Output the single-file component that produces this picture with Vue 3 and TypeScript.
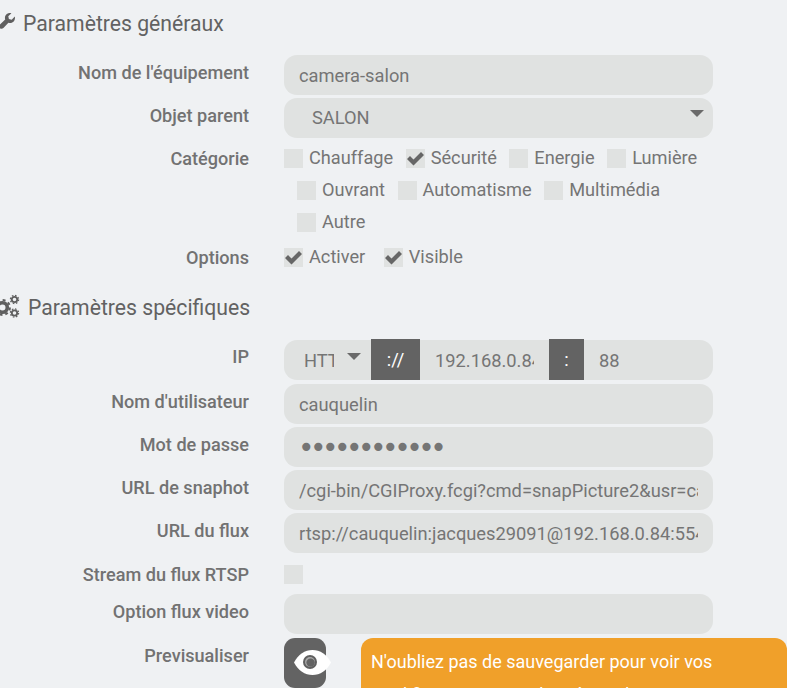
<script setup lang="ts">
import { ref } from 'vue'

interface Cat {
    label: string
    checked: boolean
}

const catRows = ref<Cat[][]>([
    [
        { label: 'Chauffage', checked: false },
        { label: 'Sécurité', checked: true },
        { label: 'Energie', checked: false },
        { label: 'Lumière', checked: false }
    ],
    [
        { label: 'Ouvrant', checked: false },
        { label: 'Automatisme', checked: false },
        { label: 'Multimédia', checked: false }
    ],
    [{ label: 'Autre', checked: false }]
])

const options = ref<Cat[]>([
    { label: 'Activer', checked: true },
    { label: 'Visible', checked: true }
])

const snapshotUrl = '/cgi-bin/CGIProxy.fcgi?cmd=snapPicture2&usr=cauquelin&pwd=jacques29091'
const streamUrl = 'rtsp://cauquelin:jacques29091@192.168.0.84:554/videoMain'
</script>

<template>
    <div class="page">
        <h3 class="legend first">
            <svg class="icon wrench" viewBox="0 0 16 16">
                <path d="M15.800 3.600c.5 2-.1 3.900-1.400 5.100-1.400 1.300-3.300 1.700-5 1.100L4.400 15c-1 1-2.600 1-3.500.1-1-1-1-2.500 0-3.500l5.300-5c-.6-1.700-.2-3.600 1.100-5C8.600.3 10.500-.2 12.400.3L9.300 3.300l.6 2.800 2.800.6z" />
            </svg>
            Paramètres généraux
        </h3>

        <div class="row row-input">
            <label>Nom de l'équipement</label>
            <input class="field" type="text" value="camera-salon" />
        </div>

        <div class="row row-input">
            <label>Objet parent</label>
            <div class="field select">
                <span>SALON</span>
                <i class="caret"></i>
            </div>
        </div>

        <div class="row row-cat">
            <label>Catégorie</label>
            <div class="cats">
                <div v-for="(cats, i) in catRows" :key="i" class="cat-line" :class="{ indented: i > 0 }">
                    <span v-for="cat in cats" :key="cat.label" class="check-item">
                        <span class="box">
                            <svg v-if="cat.checked" viewBox="0 0 19 19"><path d="M1 10l3-3 3.500 3.500L15 3l3 3-10.500 10.500z" /></svg>
                        </span>
                        {{ cat.label }}
                    </span>
                </div>
            </div>
        </div>

        <div class="row row-options">
            <label>Options</label>
            <div class="cat-line">
                <span v-for="opt in options" :key="opt.label" class="check-item">
                    <span class="box">
                        <svg v-if="opt.checked" viewBox="0 0 19 19"><path d="M1 10l3-3 3.500 3.500L15 3l3 3-10.500 10.500z" /></svg>
                    </span>
                    {{ opt.label }}
                </span>
            </div>
        </div>

        <h3 class="legend second">
            <svg class="icon gears" viewBox="0 0 19 19">
                <circle class="gear-body" cx="2.500" cy="9.500" r="4.800" stroke-width="3.600" />
                <circle class="gear-teeth" cx="2.500" cy="9.500" r="7.400" stroke-width="2" stroke-dasharray="2.900 2.900" />
                <g v-for="y in [1.5, 15]" :key="y">
                    <circle class="gear-body" cx="14.500" :cy="y" r="2.700" stroke-width="1.800" />
                    <circle class="gear-teeth" cx="14.500" :cy="y" r="4.100" stroke-width="1.200" stroke-dasharray="1.610 1.610" />
                </g>
            </svg>
            Paramètres spécifiques
        </h3>

        <div class="row row-input ip-row">
            <label>IP</label>
            <div class="field group">
                <div class="proto">
                    <span class="proto-text">HTTP</span>
                    <i class="caret"></i>
                </div>
                <span class="addon sep-proto">://</span>
                <input class="host" type="text" value="192.168.0.84" />
                <span class="addon sep-port">:</span>
                <input class="port" type="text" value="88" />
            </div>
        </div>

        <div class="row row-input tight">
            <label>Nom d'utilisateur</label>
            <input class="field" type="text" value="cauquelin" />
        </div>
        <div class="row row-input">
            <label>Mot de passe</label>
            <input class="field password" type="password" value="jacques29091" />
        </div>
        <div class="row row-input">
            <label>URL de snaphot</label>
            <input class="field" type="text" :value="snapshotUrl" />
        </div>
        <div class="row row-input">
            <label>URL du flux</label>
            <input class="field" type="text" :value="streamUrl" />
        </div>

        <div class="row row-stream">
            <label>Stream du flux RTSP</label>
            <span class="box"></span>
        </div>

        <div class="row row-input video">
            <label>Option flux video</label>
            <input class="field" type="text" value="" />
        </div>

        <div class="row row-preview">
            <label>Previsualiser</label>
            <button class="preview-btn">
                <svg class="eye" viewBox="0 0 37 25">
                    <path d="M0 12.500C4 4.500 11 0 18.500 0S33 4.500 37 12.500C33 20.500 26 25 18.500 25S4 20.500 0 12.500z" fill="#fff" />
                    <circle cx="16" cy="12" r="7" fill="#5f5f5f" />
                    <circle cx="16" cy="12" r="5" fill="#a8a8a8" />
                    <circle cx="16.600" cy="12.600" r="4.200" fill="#636363" />
                </svg>
            </button>
            <div class="alert">N'oubliez pas de sauvegarder pour voir vos modifications avant de prévisualiser</div>
        </div>
    </div>
</template>

<style>
html, body {
    margin: 0;
    background: #eff1f3;
    overflow: hidden;
}
</style>

<style scoped>
.page {
    width: 787px;
    height: 688px;
    overflow: hidden;
    font-family: Roboto, "Liberation Sans", sans-serif;
    font-size: 18.300px;
    color: #6e6e6e;
    box-sizing: border-box;
    padding-top: 11px;
}

.legend {
    display: flex;
    align-items: center;
    margin: 0;
    font-size: 21.200px;
    font-weight: 400;
    line-height: 26px;
    color: #626262;
    height: 26px;
}

.legend.second {
    margin-top: 18px;
}

.icon {
    flex: none;
    fill: #5f5f5f;
    overflow: visible;
}

.gear-body,
.gear-teeth {
    fill: none;
    stroke: #5f5f5f;
}

.wrench {
    width: 16px;
    height: 16px;
    margin: -7px 8px 0 -1px;
}

.gears {
    width: 19px;
    height: 19px;
    margin: -2px 9px 0 0;
}

.row {
    display: flex;
    align-items: flex-start;
}

.row label {
    flex: none;
    width: 249px;
    margin-right: 35px;
    text-align: right;
    font-weight: 500;
    font-size: 18.100px;
    line-height: 24px;
    color: #727272;
}

.row-input {
    height: 40px;
    margin-top: 3px;
}

.row-input label {
    padding-top: 6px;
}

.first + .row-input {
    margin-top: 18px;
}

.field {
    flex: none;
    width: 429px;
    height: 40px;
    box-sizing: border-box;
    background: #e0e2e1;
    border: 0;
    border-radius: 13px;
    padding: 0 15px;
    font: inherit;
    color: #757575;
    outline: none;
}

.password {
    padding-left: 14px;
    font-family: "DejaVu Sans", sans-serif;
    font-size: 28px;
    letter-spacing: -4.500px;
}

.select {
    position: relative;
    padding-left: 28px;
    line-height: 40px;
}

.caret {
    display: block;
    width: 0;
    height: 0;
    border-left: 7.500px solid transparent;
    border-right: 7.500px solid transparent;
    border-top: 7.500px solid #6a6a6a;
}

.select .caret {
    position: absolute;
    right: 9px;
    top: 12px;
}

.row-cat {
    margin-top: 8px;
}

.row-cat label,
.row-options label {
    padding-top: 1px;
}

.cats {
    display: flex;
    flex-direction: column;
}

.cat-line {
    display: flex;
    height: 24px;
    align-items: center;
    margin-bottom: 8px;
    white-space: nowrap;
}

.indented {
    padding-left: 13px;
}

.check-item {
    display: flex;
    align-items: center;
    margin-right: 12.500px;
    padding-bottom: 2px;
    color: #757575;
    font-size: 18.200px;
}

.check-item .box {
    margin-bottom: -2px;
}

.row-options .check-item {
    margin-right: 18.500px;
}

.box {
    flex: none;
    display: block;
    width: 19px;
    height: 19px;
    background: #e0e2e1;
    margin-right: 6px;
}

.box svg {
    display: block;
    width: 19px;
    height: 19px;
    fill: #666;
}

.row-options {
    margin-top: 3px;
}

.ip-row {
    margin-top: 19px;
}

.ip-row label {
    padding-top: 5px;
}

.group {
    display: flex;
    align-items: stretch;
    padding: 0;
}

.proto {
    flex: none;
    width: 87px;
    box-sizing: border-box;
    padding-left: 20px;
    position: relative;
    line-height: 42px;
}

.proto-text {
    display: block;
    width: 30px;
    overflow: hidden;
    white-space: nowrap;
}

.proto .caret {
    position: absolute;
    left: 63px;
    top: 13px;
}

.addon {
    flex: none;
    margin-top: -1px;
    background: #636363;
    color: #fff;
    text-align: center;
    line-height: 41px;
}

.sep-proto {
    width: 49px;
}

.sep-port {
    width: 35px;
}

.host,
.port {
    border: 0;
    background: transparent;
    font: inherit;
    color: #757575;
    outline: none;
    box-sizing: border-box;
    min-width: 0;
    padding: 0 15px;
}

.host {
    flex: none;
    width: 129px;
}

.port {
    flex: 1;
}

.tight {
    margin-top: 4px;
}

.row-stream {
    margin-top: 12px;
    height: 19px;
}

.row-stream label {
    margin-top: -2px;
}

.video {
    margin-top: 10px;
}

.row-preview {
    margin-top: 4px;
}

.row-preview label {
    padding-top: 6px;
}

.preview-btn {
    flex: none;
    display: block;
    position: relative;
    width: 42px;
    height: 50px;
    padding: 0;
    border: 0;
    border-radius: 11px;
    background: #636363;
}

.eye {
    position: absolute;
    left: 10px;
    top: 12px;
    width: 37px;
    height: 25px;
}

.alert {
    flex: none;
    width: 426px;
    margin-left: 35px;
    box-sizing: border-box;
    padding: 7px 10px;
    background: #f0a02a;
    border-radius: 12px;
    color: #fff;
    font-size: 18px;
    line-height: 33px;
}
</style>
